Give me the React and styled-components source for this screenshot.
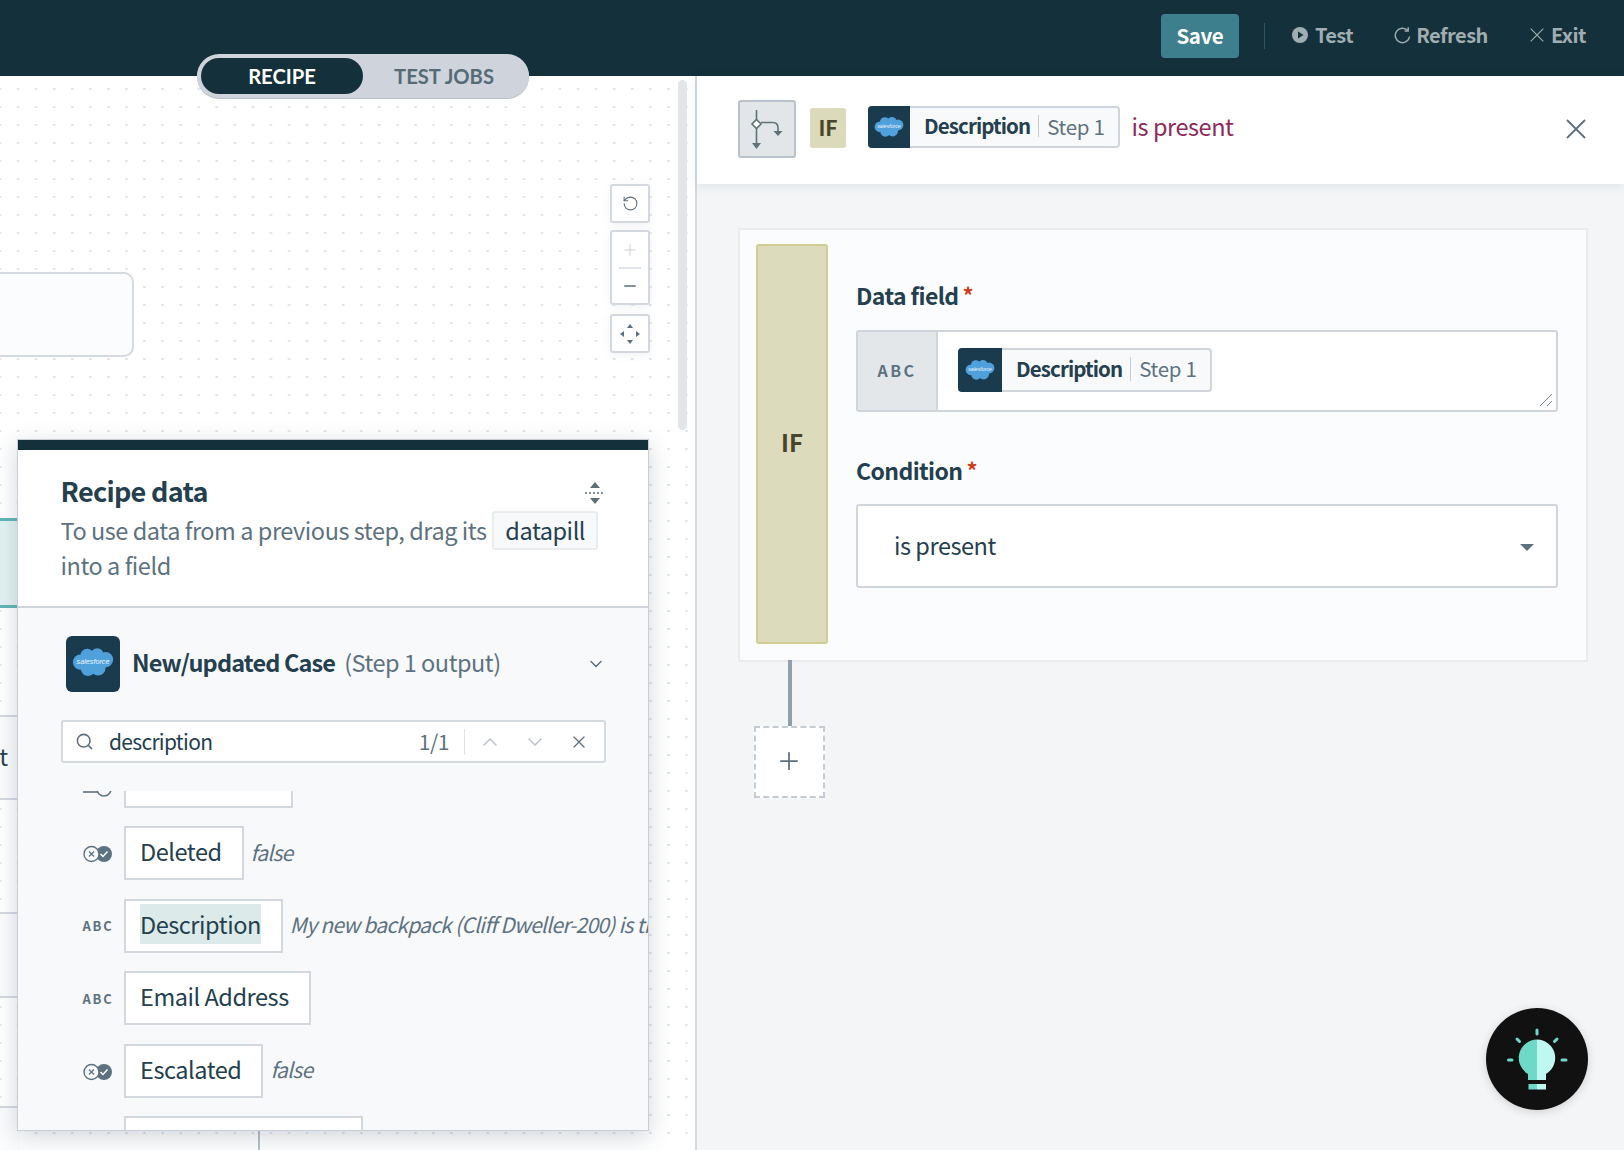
import React from 'react';
import styled, { createGlobalStyle } from 'styled-components';
import { RotateCcw, Plus, Minus, Search, ChevronDown, ChevronUp, X } from 'lucide-react';

const sans = `"Noto Sans CJK SC", "Open Sans", sans-serif`;

const GlobalStyle = createGlobalStyle`
    html, body {
        margin: 0;
        padding: 0;
        background: #fff;
    }
    * {
        box-sizing: border-box;
    }
`;

const Page = styled.div`
    position: relative;
    width: 1624px;
    height: 1150px;
    overflow: hidden;
    display: flex;
    flex-direction: column;
    font-family: ${sans};
    color: #24404f;
`;

const TopBar = styled.header`
    height: 76px;
    flex: none;
    background: #14303a;
    display: flex;
    align-items: center;
    justify-content: flex-end;
    padding-right: 38px;
`;

const SaveButton = styled.div`
    width: 78px;
    height: 44px;
    margin-bottom: 4px;
    border-radius: 4px;
    background: #3e7f8e;
    color: #fff;
    font-size: 20.5px;
    font-weight: 700;
    letter-spacing: -0.4px;
    line-height: 42px;
    text-align: center;
`;

const TopDivider = styled.div`
    width: 1px;
    height: 26px;
    margin: 0 27px 4px 25px;
    background: #2f5560;
`;

const TopAction = styled.div`
    display: flex;
    align-items: center;
    gap: ${props => props.$inner || 7}px;
    margin-left: ${props => props.$gap || 0}px;
    margin-bottom: 6px;
    color: #a0adb1;
    font-size: 20px;
    font-weight: 700;
    letter-spacing: -0.5px;
    line-height: 30px;
`;

const Tabs = styled.div`
    position: absolute;
    left: 197px;
    top: 54px;
    width: 332px;
    height: 44px;
    border-radius: 22px;
    background: #cfd4dc;
    padding: 4px;
    display: flex;
    box-shadow: 0 1px 0 #b9c1ca;
    font-family: Lato, sans-serif;
    font-weight: 700;
    font-size: 20.2px;
`;

const Tab = styled.div`
    width: 162px;
    padding-bottom: 1px;
    border-radius: 18px;
    background: ${props => props.$active ? '#14303a' : 'transparent'};
    color: ${props => props.$active ? '#fff' : '#566b78'};
    display: flex;
    align-items: center;
    justify-content: center;
`;

const Workspace = styled.div`
    flex: 1;
    display: flex;
    min-height: 0;
`;

const Canvas = styled.section`
    position: relative;
    width: 697px;
    flex: none;
    overflow: hidden;
    border-right: 2px solid #d5d9df;
    background-color: #fff;
    background-image: radial-gradient(circle, #dfe3e8 1px, transparent 1.4px);
    background-size: 18.07px 18px;
    background-position: -9px 4px;
`;

const ScrollThumb = styled.div`
    position: absolute;
    left: 678px;
    top: 4px;
    width: 9px;
    height: 350px;
    border-radius: 5px;
    background: #e3e6e9;
`;

const RecipeNode = styled.div`
    position: absolute;
    left: -12px;
    top: 196px;
    width: 146px;
    height: 85px;
    border: 2px solid #d5d9e0;
    border-radius: 10px;
    background: #fbfcfd;
`;

const BehindNode = styled.div`
    position: absolute;
    left: 0;
    top: ${props => props.$top}px;
    width: 20px;
    height: ${props => props.$height}px;
    background: #fbfcfd;
    border-top: 2px solid #d5d9e0;
    border-bottom: 2px solid #d5d9e0;
`;

const ActiveNode = styled(BehindNode)`
    background: #e3f2f1;
    border-top: 3px solid #62b5b8;
    border-bottom: 3px solid #62b5b8;
`;

const BehindLabel = styled.div`
    position: absolute;
    left: -13px;
    top: 664px;
    font-size: 23.5px;
    letter-spacing: -0.45px;
    line-height: 32px;
`;

const BehindLine = styled.div`
    position: absolute;
    left: 258px;
    top: 1040px;
    width: 2px;
    height: 40px;
    background: #b7c0c8;
`;

const Controls = styled.div`
    position: absolute;
    left: 610px;
    top: 108px;
    width: 40px;
    display: flex;
    flex-direction: column;
`;

const ControlBox = styled.div`
    height: ${props => props.$height}px;
    margin-top: ${props => props.$gap || 0}px;
    border: 2px solid #d3d8df;
    border-radius: 3px;
    background: #fff;
    color: #5c6f7d;
    display: flex;
    flex-direction: column;
    align-items: center;
    justify-content: center;
    box-shadow: 0 2px 8px rgba(60, 80, 100, 0.08);
`;

const ControlRule = styled.div`
    width: 22px;
    height: 2px;
    margin: 8px 0;
    background: #e0e3e8;
`;

const DataPanel = styled.section`
    position: absolute;
    left: 17px;
    top: 363px;
    width: 632px;
    height: 692px;
    background: #f8f9fb;
    border: 1px solid #c9ced6;
    display: flex;
    flex-direction: column;
    box-shadow: 0 6px 22px rgba(50, 70, 90, 0.22);
`;

const PanelHead = styled.div`
    flex: none;
    height: 168px;
    background: #fff;
    border-top: 10px solid #14303a;
    border-bottom: 2px solid #d0d5dc;
    padding: 23px 42px 0 42.5px;
`;

const TitleRow = styled.div`
    display: flex;
    justify-content: space-between;
    align-items: center;
    margin-bottom: 4px;
`;

const SortHandle = styled.div`
    display: flex;
    margin-top: 4px;
`;

const PanelTitle = styled.h2`
    margin: 0;
    font-size: 27px;
    letter-spacing: -0.7px;
    line-height: 36px;
    font-weight: 700;
    color: #24404f;
`;

const PanelHint = styled.p`
    margin: 0;
    width: 545px;
    font-size: 23.5px;
    letter-spacing: -0.45px;
    line-height: 35px;
    color: #5d7280;
`;

const HintChip = styled.span`
    display: inline-block;
    height: 39px;
    line-height: 35px;
    margin: -4px 0 -3px 1px;
    padding: 0 11px;
    vertical-align: baseline;
    border: 2px solid #e9ecef;
    border-radius: 3px;
    background: #f8f9fb;
    color: #24404f;
`;

const StepRow = styled.div`
    flex: none;
    display: flex;
    align-items: center;
    margin: 28px 42px 0 48px;
`;

const StepTile = styled.div`
    width: ${props => props.$size}px;
    height: ${props => props.$high || props.$size}px;
    flex: none;
    padding-bottom: 4px;
    background: #1a3b4e;
    border-radius: 6px;
    display: flex;
    align-items: center;
    justify-content: center;
`;

const StepName = styled.div`
    margin: 0 0 4px 12px;
    font-size: 23.5px;
    letter-spacing: -0.85px;
    line-height: 36px;
    font-weight: 700;
    color: #24404f;
`;

const StepNote = styled.div`
    margin: 0 0 4px 9px;
    flex: 1;
    font-size: 23.5px;
    letter-spacing: -0.5px;
    line-height: 36px;
    color: #5d7280;
`;

const SearchBox = styled.div`
    flex: none;
    height: 43px;
    margin: 28px 42px 0 43px;
    padding: 0 15px 0 12px;
    display: flex;
    align-items: center;
    border: 2px solid #d5d9e0;
    border-radius: 3px;
    background: #fff;
    color: #5c6f7d;
`;

const SearchText = styled.div`
    margin: 0 0 1px 15px;
    flex: 1;
    font-size: 21px;
    letter-spacing: -0.7px;
    color: #24404f;
`;

const SearchCount = styled.div`
    margin-bottom: 2px;
    font-size: 21px;
    letter-spacing: -0.4px;
    color: #5d7280;
`;

const SearchRule = styled.div`
    width: 1px;
    height: 26px;
    margin: 0 13px 0 15px;
    background: #dfe3e7;
`;

const SearchStep = styled.div`
    display: flex;
    margin-left: ${props => props.$gap}px;
`;

const FieldList = styled.div`
    flex: 1;
    min-height: 0;
    margin-top: 28px;
    overflow: hidden;
`;

const FieldListInner = styled.div`
    margin-top: -37.5px;
    padding-left: 65px;
    display: flex;
    flex-direction: column;
    gap: 18.5px;
`;

const FieldRow = styled.div`
    display: flex;
    align-items: center;
    height: 54px;
    white-space: nowrap;
`;

const TypeSlot = styled.div`
    width: 30px;
    flex: none;
    margin-right: 11px;
    display: flex;
    justify-content: center;
`;

const TypeLabel = styled.span`
    font-size: ${props => props.$size || 13}px;
    font-weight: 700;
    letter-spacing: ${props => props.$spacing || 1.8}px;
    color: #5d7280;
`;

const IconNudge = styled.div`
    margin-top: ${props => props.$top}px;
    display: flex;
`;

const FieldChip = styled.div`
    height: 54px;
    flex: none;
    padding: 0 20px 0 14px;
    border: 2px solid #d3d8df;
    background: #fff;
    font-size: 23.5px;
    letter-spacing: -0.45px;
    line-height: 47px;
    color: #24404f;
`;

const Match = styled.span`
    background: #dcebea;
    padding: 3px 0;
`;

const FieldValue = styled.div`
    margin: 0 0 3px 7px;
    font-size: 21px;
    letter-spacing: -0.75px;
    font-style: italic;
    color: #5d7280;
`;

const RightPane = styled.section`
    position: relative;
    flex: 1;
    background: #f3f5f7;
    display: flex;
    flex-direction: column;
`;

const StepHeader = styled.div`
    height: 108px;
    flex: none;
    background: #fff;
    display: flex;
    align-items: center;
    padding: 0 38px 2px 41px;
    box-shadow: 0 2px 10px rgba(50, 70, 90, 0.1);
`;

const BranchToggle = styled.div`
    width: 58px;
    height: 58px;
    border: 2px solid #b9c2ca;
    border-radius: 3px;
    background: #e3e6e9;
`;

const IfBadge = styled.div`
    width: 36px;
    height: 40px;
    margin: 0 22px 2px 14px;
    border-radius: 3px;
    background: #dbdabb;
    color: #48452a;
    font-size: 21px;
    font-weight: 700;
    line-height: 38px;
    text-align: center;
`;

const HeaderPill = styled.div`
    display: flex;
    margin-bottom: 4px;
`;

const Pill = styled.div`
    height: ${props => props.$high}px;
    display: inline-flex;
    border: 2px solid #d0d5dc;
    border-left: none;
    border-radius: 4px;
    background: #f8f9fb;
    font-size: 20.5px;
    line-height: ${props => props.$high - 8}px;
`;

const PillTile = styled.div`
    width: ${props => props.$size}px;
    margin: -2px 0;
    flex: none;
    background: #1a3b4e;
    border-radius: 4px 0 0 4px;
    display: flex;
    align-items: center;
    justify-content: center;
`;

const PillName = styled.span`
    margin-left: 14px;
    font-weight: 700;
    letter-spacing: -0.9px;
    color: #24404f;
`;

const PillStep = styled.span`
    margin: 7px 13px 9px 8px;
    padding-left: 8px;
    border-left: 1px solid #c7ccd3;
    color: #5d7280;
    letter-spacing: -0.3px;
    line-height: 22px;
`;

const PresentText = styled.div`
    margin: 0 0 6px 12px;
    flex: 1;
    font-size: 23.5px;
    letter-spacing: -0.45px;
    color: #8e2a5a;
`;

const PaneBody = styled.div`
    padding: 44px 36px 0 41px;
`;

const ConditionCard = styled.div`
    height: 434px;
    padding: 14px 0 16px 16px;
    display: flex;
    border: 2px solid #e9ebee;
    background: #fbfcfd;
`;

const IfBar = styled.div`
    width: 72px;
    flex: none;
    border: 2px solid #cfcd95;
    border-radius: 3px;
    background: #dcdbbc;
    color: #48452a;
    font-size: 24px;
    font-weight: 700;
    display: flex;
    align-items: center;
    justify-content: center;
    padding-bottom: 5px;
`;

const FormColumn = styled.div`
    flex: 1;
    padding: 33px 28px 0 28px;
`;

const FieldLabel = styled.div`
    display: flex;
    gap: 4px;
    margin: ${props => props.$margin || 0};
    font-size: 23px;
    letter-spacing: -0.6px;
    line-height: 36px;
    font-weight: 700;
    color: #24404f;
`;

const Required = styled.span`
    color: #cf3d20;
    font-size: 22px;
    line-height: 34px;
`;

const DataInput = styled.div`
    position: relative;
    height: 82px;
    display: flex;
    border: 2px solid #d0d5dc;
    border-radius: 3px;
    background: #fff;
`;

const InputAddon = styled.div`
    width: 80px;
    flex: none;
    padding-bottom: 2px;
    background: #e4e7ea;
    border-right: 2px solid #d0d5dc;
    display: flex;
    align-items: center;
    justify-content: center;
`;

const InputBody = styled.div`
    padding: 16px 0 0 20px;
`;

const ResizeHandle = styled.svg`
    position: absolute;
    right: 3px;
    bottom: 3px;
`;

const SelectBox = styled.div`
    height: 84px;
    display: flex;
    align-items: center;
    justify-content: space-between;
    padding: 0 22px 2px 36px;
    border: 2px solid #d0d5dc;
    border-radius: 3px;
    background: #fff;
    font-size: 23.5px;
    letter-spacing: -0.45px;
    color: #24404f;
`;

const Caret = styled.div`
    width: 0;
    height: 0;
    border-left: 7px solid transparent;
    border-right: 7px solid transparent;
    border-top: 7px solid #5d7280;
    margin-top: 4px;
`;

const AddColumn = styled.div`
    width: 71px;
    margin: -2px 0 0 16px;
    display: flex;
    flex-direction: column;
    align-items: center;
`;

const Connector = styled.div`
    width: 4px;
    height: 66px;
    background: #93a0ab;
`;

const AddBox = styled.div`
    width: 71px;
    height: 72px;
    padding: 0 2px 2px 0;
    border: 2px dashed #c5cbd2;
    background: #fff;
    color: #5c6f7d;
    display: flex;
    align-items: center;
    justify-content: center;
`;

const HintBubble = styled.div`
    position: absolute;
    right: 36px;
    bottom: 40px;
    width: 102px;
    height: 102px;
    border-radius: 50%;
    background: #111;
    box-shadow: 0 2px 10px rgba(0, 0, 0, 0.15);
`;

const CloudLogo = ({ width }) => (
    <svg width={width} height={width * 0.72} viewBox="0 0 50 36">
        <g fill="#4fa0db">
            <circle cx="18" cy="10" r="8" />
            <circle cx="30" cy="9" r="7.5" />
            <circle cx="40" cy="15" r="9" />
            <circle cx="10" cy="18" r="9" />
            <circle cx="31" cy="25" r="9" />
            <circle cx="19" cy="26" r="8.5" />
            <rect x="10" y="10" width="30" height="15" />
        </g>
        <text x="25" y="20.5" textAnchor="middle" fontSize="8.6" fontStyle="italic" fill="#f0f7fc" fontFamily="Liberation Sans, sans-serif">salesforce</text>
    </svg>
);

const PlayIcon = () => (
    <svg width="16" height="16" viewBox="0 0 16 16">
        <circle cx="8" cy="8" r="8" fill="#a0adb1" />
        <path d="M6 4.5 11.5 8 6 11.5Z" fill="#14303a" />
    </svg>
);

const RefreshIcon = () => (
    <svg width="17" height="18" viewBox="0 0 17 18" fill="none" stroke="#a0adb1" strokeWidth="1.5">
        <path d="M13.8 4.6A7.2 7.2 0 1 0 15.6 10.5" />
        <path d="M14.2 1.2V4.9H10.6" />
    </svg>
);

const ThinCross = ({ size, color, weight }) => (
    <svg width={size} height={size} viewBox="0 0 20 20" fill="none" stroke={color} strokeWidth={weight}>
        <path d="M1 1 19 19M19 1 1 19" />
    </svg>
);

const BranchIcon = () => (
    <svg width="54" height="54" viewBox="0 0 54 54" fill="none" stroke="#5f7278" strokeWidth="1.6">
        <path d="M16.5 8V20M16.5 24V42" />
        <path d="M16.5 17.5 21 22 16.5 26.5 12 22Z" fill="#fff" />
        <path d="M21 20.5H33Q38 20.5 38 26V29" />
        <path d="M33.5 29H42.5L38 34Z" fill="#5f7278" stroke="none" />
        <path d="M12 41H21L16.5 47Z" fill="#5f7278" stroke="none" />
    </svg>
);

const CenterIcon = () => (
    <svg width="24" height="24" viewBox="0 0 24 24" fill="#5c6f7d">
        <path d="M12 2 15 6H9ZM12 22 9 18H15ZM2 12 6 9V15ZM22 12 18 15V9Z" />
    </svg>
);

const SortIcon = () => (
    <svg width="22" height="24" viewBox="0 0 22 24">
        <path d="M11 1 16 7H6ZM11 23 6 17H16Z" fill="#5c6f7d" />
        <path d="M1 12H21" stroke="#5c6f7d" strokeWidth="1.5" strokeDasharray="2 2" />
    </svg>
);

const BooleanIcon = () => (
    <svg width="30" height="18" viewBox="0 0 30 18">
        <circle cx="21" cy="9" r="8" fill="#5d7280" />
        <path d="M17.5 9 20 11.5 24.5 6.5" fill="none" stroke="#fff" strokeWidth="1.5" />
        <circle cx="8.5" cy="9" r="7.5" fill="#f8f9fb" stroke="#5d7280" strokeWidth="1.4" />
        <path d="M6 6.5 11 11.5M11 6.5 6 11.5" stroke="#5d7280" strokeWidth="1.3" />
    </svg>
);

const LinkIcon = () => (
    <svg width="30" height="26" viewBox="0 0 30 26" fill="none" stroke="#5d7280" strokeWidth="1.6">
        <path d="M0 21H14" />
        <circle cx="21" cy="18" r="7" />
    </svg>
);

const BulbIcon = () => (
    <svg width="102" height="102" viewBox="0 0 102 102">
        <path d="M51 31.5A18.5 18.5 0 0 0 42 66V72H51Z" fill="#6fd9c7" />
        <path d="M51 31.5A18.5 18.5 0 0 1 60 66V72H51Z" fill="#bff8f0" />
        <rect x="42.5" y="76" width="8.5" height="5.5" fill="#6fd9c7" />
        <rect x="51" y="76" width="9" height="5.5" fill="#bff8f0" />
        <g stroke="#6fd9c7" strokeWidth="3" strokeLinecap="round">
            <path d="M51 22V26" />
            <path d="M31 31 33.5 33.5" />
            <path d="M71 31 68.5 33.5" />
            <path d="M22.5 52H26" />
            <path d="M76 52H80" />
        </g>
    </svg>
);

const DescriptionPill = ({ high, tile, logo }) => (
    <Pill $high={high}>
        <PillTile $size={tile}>
            <CloudLogo width={logo} />
        </PillTile>
        <PillName>Description</PillName>
        <PillStep>Step 1</PillStep>
    </Pill>
);

const fields = [
    { name: 'CreatedDate', type: 'link' },
    { name: 'Deleted', type: 'bool', value: 'false' },
    { name: 'Description', type: 'text', match: true, value: 'My new backpack (Cliff Dweller-200) is the best one I have had' },
    { name: 'Email Address', type: 'text' },
    { name: 'Escalated', type: 'bool', value: 'false' },
    { name: 'External Case Code', type: 'text' },
];

const typeIcon = (type) => {
    if (type === 'bool') return <IconNudge $top={2}><BooleanIcon /></IconNudge>;
    if (type === 'link') return <IconNudge $top={6}><LinkIcon /></IconNudge>;
    return <TypeLabel>ABC</TypeLabel>;
};

const App = () => {
    return (
        <Page>
            <GlobalStyle />
            <TopBar>
                <SaveButton>Save</SaveButton>
                <TopDivider />
                <TopAction><PlayIcon />Test</TopAction>
                <TopAction $gap={41} $inner={5}><RefreshIcon />Refresh</TopAction>
                <TopAction $gap={42}><ThinCross size={14} color="#a0adb1" weight="1.6" />Exit</TopAction>
            </TopBar>
            <Workspace>
                <Canvas>
                    <RecipeNode />
                    <ActiveNode $top={442} $height={90} />
                    <BehindNode $top={639} $height={85} />
                    <BehindNode $top={836} $height={86} />
                    <BehindNode $top={1030} $height={60} />
                    <BehindLabel>et</BehindLabel>
                    <BehindLine />
                    <ScrollThumb />
                    <Controls>
                        <ControlBox $height={39}><RotateCcw size={17} strokeWidth={1.5} /></ControlBox>
                        <ControlBox $height={75} $gap={7}>
                            <Plus size={18} strokeWidth={1.3} color="#c9ced5" />
                            <ControlRule />
                            <Minus size={18} strokeWidth={2} />
                        </ControlBox>
                        <ControlBox $height={39} $gap={9}><CenterIcon /></ControlBox>
                    </Controls>
                    <DataPanel>
                        <PanelHead>
                            <TitleRow>
                                <PanelTitle>Recipe data</PanelTitle>
                                <SortHandle><SortIcon /></SortHandle>
                            </TitleRow>
                            <PanelHint>To use data from a previous step, drag its <HintChip>datapill</HintChip> into a field</PanelHint>
                        </PanelHead>
                        <StepRow>
                            <StepTile $size={54} $high={56}><CloudLogo width={42} /></StepTile>
                            <StepName>New/updated Case</StepName>
                            <StepNote>(Step 1 output)</StepNote>
                            <ChevronDown size={20} strokeWidth={1.7} color="#5c6f7d" />
                        </StepRow>
                        <SearchBox>
                            <Search size={19} strokeWidth={2} />
                            <SearchText>description</SearchText>
                            <SearchCount>1/1</SearchCount>
                            <SearchRule />
                            <ChevronUp size={24} strokeWidth={1.4} color="#b6bec6" />
                            <SearchStep $gap={21}><ChevronDown size={24} strokeWidth={1.4} color="#b6bec6" /></SearchStep>
                            <SearchStep $gap={22}><X size={20} strokeWidth={1.5} /></SearchStep>
                        </SearchBox>
                        <FieldList>
                            <FieldListInner>
                                {fields.map(field => (
                                    <FieldRow key={field.name}>
                                        <TypeSlot>{typeIcon(field.type)}</TypeSlot>
                                        <FieldChip>
                                            {field.match ? <Match>{field.name}</Match> : field.name}
                                        </FieldChip>
                                        {field.value && <FieldValue>{field.value}</FieldValue>}
                                    </FieldRow>
                                ))}
                            </FieldListInner>
                        </FieldList>
                    </DataPanel>
                </Canvas>
                <RightPane>
                    <StepHeader>
                        <BranchToggle><BranchIcon /></BranchToggle>
                        <IfBadge>IF</IfBadge>
                        <HeaderPill><DescriptionPill high={42} tile={42} logo={30} /></HeaderPill>
                        <PresentText>is present</PresentText>
                        <ThinCross size={20} color="#5c6f7d" weight="1.8" />
                    </StepHeader>
                    <PaneBody>
                        <ConditionCard>
                            <IfBar>IF</IfBar>
                            <FormColumn>
                                <FieldLabel $margin="0 0 17px">Data field<Required>*</Required></FieldLabel>
                                <DataInput>
                                    <InputAddon><TypeLabel $size={16} $spacing={2.5}>ABC</TypeLabel></InputAddon>
                                    <InputBody><DescriptionPill high={44} tile={44} logo={30} /></InputBody>
                                    <ResizeHandle width="14" height="14" viewBox="0 0 14 14" stroke="#7d8a94" strokeWidth="1">
                                        <path d="M1 13 13 1M8 13 13 8" />
                                    </ResizeHandle>
                                </DataInput>
                                <FieldLabel $margin="40px 0 16px">Condition<Required>*</Required></FieldLabel>
                                <SelectBox>
                                    is present
                                    <Caret />
                                </SelectBox>
                            </FormColumn>
                        </ConditionCard>
                        <AddColumn>
                            <Connector />
                            <AddBox><Plus size={28} strokeWidth={1.5} /></AddBox>
                        </AddColumn>
                    </PaneBody>
                    <HintBubble><BulbIcon /></HintBubble>
                </RightPane>
            </Workspace>
            <Tabs>
                <Tab $active>RECIPE</Tab>
                <Tab>TEST JOBS</Tab>
            </Tabs>
        </Page>
    );
};

export default App;
